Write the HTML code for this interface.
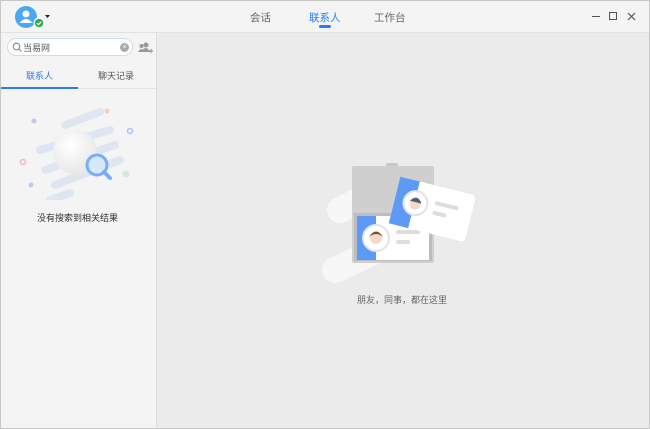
<!DOCTYPE html>
<html><head><meta charset="utf-8"><style>
*{margin:0;padding:0;box-sizing:border-box}
body{width:650px;height:429px;overflow:hidden;background:#ebebeb;font-family:"Liberation Sans","Noto Sans CJK SC",sans-serif;position:relative}
.frame{position:absolute;left:0;top:0;width:650px;height:429px;border:1px solid #c8c8c8;pointer-events:none}
.top{position:absolute;left:0;top:0;width:650px;height:33px;background:#f4f4f4;border-bottom:1px solid #e2e2e2}
.tab{position:absolute;top:10px;font-size:10.5px;color:#666}
.left{position:absolute;left:0;top:33px;width:157px;height:396px;background:#f4f4f4;border-right:1px solid #dcdcdc}
.t{position:absolute;font-size:9px}
</style></head><body>
<div class="top">
 <svg style="position:absolute;left:14px;top:5px" width="40" height="26">
  <circle cx="12" cy="12" r="11" fill="#4aa7f2"/>
  <circle cx="12" cy="9" r="3.5" fill="#fff"/>
  <path d="M5.5 18 Q12 10 18.5 18 Z" fill="#fff"/>
  <circle cx="25" cy="18" r="5.5" fill="#fff"/>
  <circle cx="25" cy="18" r="4.3" fill="#2fb24b"/>
  <path d="M22.8 18 l1.6 1.6 l2.8 -2.8" stroke="#fff" stroke-width="1.2" fill="none"/>
  <path d="M31 10 h5 l-2.5 3 z" fill="#222"/>
 </svg>
 <div class="tab" style="left:250px">会话</div>
 <div class="tab" style="left:309px;color:#2b7cf0">联系人</div>
 <div style="position:absolute;left:319px;top:25px;width:12px;height:3px;border-radius:2px;background:#2b7cf0"></div>
 <div class="tab" style="left:374px">工作台</div>
 <div style="position:absolute;left:592px;top:16px;width:8px;height:1px;background:#555"></div>
 <div style="position:absolute;left:609px;top:12px;width:8px;height:8px;border:1.5px solid #555"></div>
 <svg style="position:absolute;left:627px;top:12px" width="9" height="9"><path d="M1 1L8 8M8 1L1 8" stroke="#555" stroke-width="1.2"/></svg>
</div>
<div class="left">
 <div style="position:absolute;left:7px;top:5px;width:126px;height:18px;border-radius:9px;background:#fff;border:1px solid #cfdcee"></div>
 <svg style="position:absolute;left:12px;top:9px" width="10" height="10"><circle cx="4.5" cy="4.5" r="3.3" stroke="#888" fill="none" stroke-width="1.1"/><path d="M7 7L9.5 9.5" stroke="#888" stroke-width="1.1"/></svg>
 <div class="t" style="left:23px;top:8px;color:#555">当易网</div>
 <div style="position:absolute;left:120px;top:10px;width:9px;height:9px;border-radius:50%;background:#aaa;color:#fff;font-size:7px;line-height:9px;text-align:center">×</div>
 <svg style="position:absolute;left:137px;top:8px" width="16" height="14"><circle cx="9" cy="4" r="2.5" fill="#999"/><path d="M4 11 Q9 3 13 11Z" fill="#999"/><circle cx="4.5" cy="5" r="2" fill="#999"/><path d="M1 11 Q4.5 5 7 11Z" fill="#999"/><path d="M12 10h4M14 8v4" stroke="#999" stroke-width="1.2"/></svg>
 <div class="t" style="left:26px;top:36px;color:#2b7cf0">联系人</div>
 <div class="t" style="left:98px;top:36px;color:#555">聊天记录</div>
 <div style="position:absolute;left:0;top:55px;width:156px;height:1px;background:#e2e2e2"></div>
 <div style="position:absolute;left:0;top:54px;width:78px;height:2px;background:#2b7cf0"></div>
 <svg style="position:absolute;left:10px;top:67px" width="140" height="100">
  <defs><radialGradient id="g" cx="0.4" cy="0.35" r="0.7"><stop offset="0" stop-color="#fff"/><stop offset="1" stop-color="#e6e6e6"/></radialGradient></defs>
  <g stroke="#dfe6f2" stroke-width="8" stroke-linecap="round"><path d="M55 25L90 12"/><path d="M30 50L100 30"/><path d="M35 70L105 45"/><path d="M45 85L110 60"/><path d="M40 100L60 93"/></g>
  <circle cx="65" cy="52" r="22" fill="url(#g)"/>
  <circle cx="87" cy="65" r="10" fill="#d8e8fb" stroke="#78aef5" stroke-width="3"/>
  <path d="M94 72L100 78" stroke="#78aef5" stroke-width="4" stroke-linecap="round"/>
  <circle cx="24" cy="21" r="2.5" fill="#cfc0ee"/><circle cx="97" cy="11" r="2.5" fill="#f5cfb7"/>
  <circle cx="120" cy="31" r="2.5" fill="none" stroke="#a8c6f4" stroke-width="1.5"/>
  <circle cx="13" cy="62" r="2.5" fill="none" stroke="#f2b8c8" stroke-width="1.5"/>
  <circle cx="116" cy="74" r="3.5" fill="#cdebdd"/><circle cx="21" cy="85" r="2.5" fill="#b8cdf3"/>
 </svg>
 <div class="t" style="left:37px;top:178px;color:#333">没有搜索到相关结果</div>
</div>
<svg style="position:absolute;left:320px;top:160px" width="160" height="130">
 <path d="M20 50L60 30 M15 110L90 75" stroke="#f7f7f7" stroke-width="26" stroke-linecap="round"/>
 <rect x="66" y="3" width="12" height="6" rx="2" fill="#c8c8c8"/>
 <rect x="32" y="6" width="82" height="97" rx="2" fill="#cfcfcf"/>
 <rect x="34" y="53" width="78" height="48" fill="#bdbdbd"/>
 <rect x="37" y="56" width="72" height="44" fill="#fff"/>
 <rect x="37" y="56" width="19" height="44" fill="#5c9af5"/>
 <circle cx="56" cy="78" r="13" fill="#fff" stroke="#e3e3e3" stroke-width="2"/>
 <circle cx="56" cy="78" r="6" fill="#f8d9c3"/><path d="M49 77 Q56 66 63 77 Q56 71 49 77" fill="#7a4a2d"/>
 <rect x="76" y="70" width="24" height="4" rx="2" fill="#ddd"/><rect x="76" y="80" width="14" height="4" rx="2" fill="#ddd"/>
 <g transform="rotate(14 110 55)"><rect x="72" y="25" width="78" height="48" rx="4" fill="#fff"/><rect x="72" y="25" width="20" height="48" fill="#5c9af5"/>
 <circle cx="93" cy="47" r="12" fill="#fff" stroke="#e3e3e3" stroke-width="2"/><circle cx="93" cy="48" r="5.5" fill="#f8d9c3"/><path d="M87 46 Q93 37 99 46Z" fill="#55606e"/>
 <rect x="112" y="40" width="24" height="4" rx="2" fill="#ddd"/><rect x="112" y="50" width="14" height="4" rx="2" fill="#ddd"/></g>
</svg>
<div class="t" style="left:357px;top:293px;color:#666">朋友，同事，都在这里</div>
<div class="frame"></div>
</body></html>
